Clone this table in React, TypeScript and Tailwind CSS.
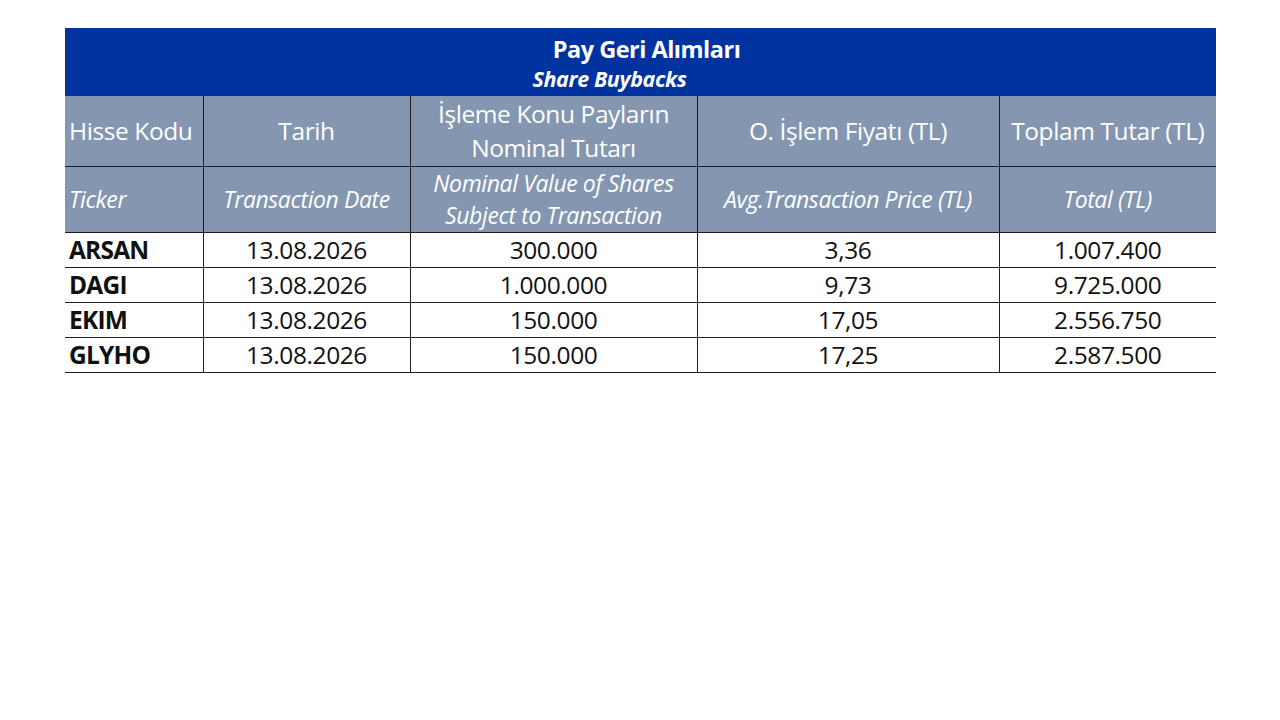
import React from "react";

const rows = [
  { ticker: "ARSAN", date: "13.08.2026", nominal: "300.000", price: "3,36", total: "1.007.400" },
  { ticker: "DAGI", date: "13.08.2026", nominal: "1.000.000", price: "9,73", total: "9.725.000" },
  { ticker: "EKIM", date: "13.08.2026", nominal: "150.000", price: "17,05", total: "2.556.750" },
  { ticker: "GLYHO", date: "13.08.2026", nominal: "150.000", price: "17,25", total: "2.587.500" },
];

export default function App() {
  return (
    <div className="w-[1280px] h-[720px] bg-white pt-[28px] pl-[65px] font-['Open_Sans',sans-serif]">
      <table className="w-[1151px] border-collapse table-fixed">
        <colgroup>
          <col className="w-[138px]" />
          <col className="w-[207px]" />
          <col className="w-[287px]" />
          <col className="w-[302px]" />
          <col className="w-[217px]" />
        </colgroup>
        <thead>
          {/* Title band */}
          <tr className="bg-[#0033a0] text-white">
            <th colSpan={5} className="h-[68px] p-0 text-center align-middle">
              <div className="pl-[12px] text-[23.5px] font-bold leading-[34px] tracking-[-0.5px]">Pay Geri Alımları</div>
              <div className="pr-[62px] text-[21.5px] font-bold italic leading-[26px] tracking-[-0.4px]">Share Buybacks</div>
            </th>
          </tr>
          <tr className="bg-[#8496b0] text-white text-[24.5px] font-normal leading-[34px] tracking-[-0.4px]">
            <th className="h-[70px] border border-[#1f1f1f] border-t-0 border-l-0 text-left pl-[4px] font-normal">Hisse Kodu</th>
            <th className="border border-[#1f1f1f] border-t-0 text-center font-normal">Tarih</th>
            <th className="border border-[#1f1f1f] border-t-0 text-center font-normal">
              İşleme Konu Payların
              <br />
              Nominal Tutarı
            </th>
            <th className="border border-[#1f1f1f] border-t-0 text-center font-normal">O. İşlem Fiyatı (TL)</th>
            <th className="border border-[#1f1f1f] border-t-0 border-r-0 text-center font-normal">Toplam Tutar (TL)</th>
          </tr>
          <tr className="bg-[#8496b0] text-white text-[23px] italic leading-[32px] tracking-[-0.4px]">
            <th className="h-[66px] border border-[#1f1f1f] border-l-0 text-left pl-[4px] font-normal">Ticker</th>
            <th className="border border-[#1f1f1f] text-center font-normal">Transaction Date</th>
            <th className="border border-[#1f1f1f] text-center font-normal">
              Nominal Value of Shares
              <br />
              Subject to Transaction
            </th>
            <th className="border border-[#1f1f1f] text-center font-normal">Avg.Transaction Price (TL)</th>
            <th className="border border-[#1f1f1f] border-r-0 text-center font-normal">Total (TL)</th>
          </tr>
        </thead>
        <tbody className="text-[24.5px] text-[#111] leading-[30px] tracking-[-0.4px]">
          {rows.map((r) => (
            <tr key={r.ticker}>
              <td className="h-[35px] border border-[#1f1f1f] border-l-0 pl-[4px] font-bold tracking-[-0.8px]">{r.ticker}</td>
              <td className="border border-[#1f1f1f] text-center">{r.date}</td>
              <td className="border border-[#1f1f1f] text-center">{r.nominal}</td>
              <td className="border border-[#1f1f1f] text-center">{r.price}</td>
              <td className="border border-[#1f1f1f] border-r-0 text-center">{r.total}</td>
            </tr>
          ))}
        </tbody>
      </table>
    </div>
  );
}
